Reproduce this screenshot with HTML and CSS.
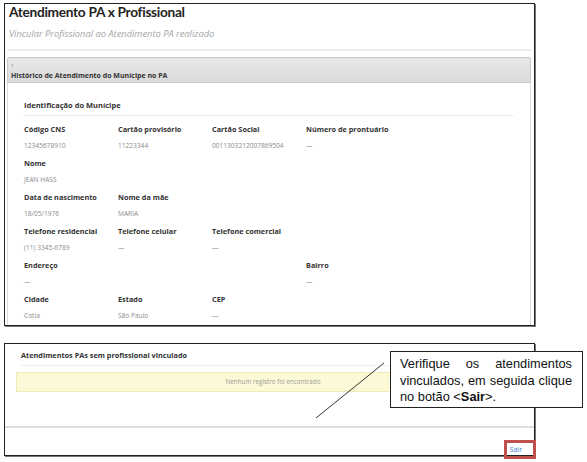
FILE: index.html
```html
<!DOCTYPE html>
<html lang="pt">
<head>
<meta charset="utf-8">
<title>Atendimento PA x Profissional</title>
<link rel="stylesheet" href="styles.css">
</head>
<body>
<div class="frame frame-top">
  <h1 class="title">Atendimento PA x Profissional</h1>
  <p class="subtitle">Vincular Profissional ao Atendimento PA realizado</p>
  <div class="rule"></div>
  <div class="panel">
    <div class="panel-head">
      <span class="chev">›</span>
      <span class="panel-title">Histórico de Atendimento do Munícipe no PA</span>
    </div>
    <div class="panel-body">
      <div class="section-title">Identificação do Munícipe</div>
      <div class="grid">
        <div class="lbl">Código CNS</div><div class="lbl">Cartão provisório</div><div class="lbl">Cartão Social</div><div class="lbl">Número de prontuário</div>
        <div class="val">12345678910</div><div class="val">11223344</div><div class="val">0011303212007869504</div><div class="val">—</div>
        <div class="lbl">Nome</div><div></div><div></div><div></div>
        <div class="val">JEAN HASS</div><div></div><div></div><div></div>
        <div class="lbl">Data de nascimento</div><div class="lbl">Nome da mãe</div><div></div><div></div>
        <div class="val">18/05/1976</div><div class="val">MARIA</div><div></div><div></div>
        <div class="lbl">Telefone residencial</div><div class="lbl">Telefone celular</div><div class="lbl">Telefone comercial</div><div></div>
        <div class="val">(11) 3345-6789</div><div class="val">—</div><div class="val">—</div><div></div>
        <div class="lbl">Endereço</div><div></div><div></div><div class="lbl">Bairro</div>
        <div class="val">—</div><div></div><div></div><div class="val">—</div>
        <div class="lbl">Cidade</div><div class="lbl">Estado</div><div class="lbl">CEP</div><div></div>
        <div class="val">Cotia</div><div class="val">São Paulo</div><div class="val">—</div><div></div>
      </div>
    </div>
  </div>
</div>

<div class="frame frame-bottom">
  <div class="list-title">Atendimentos PAs sem profissional vinculado</div>
  <div class="empty">Nenhum registro foi encontrado</div>
  <div class="footer-rule"></div>
  <div class="footer"><a class="sair" href="#">Sair</a></div>
  <div class="highlight"></div>
</div>

<svg class="pointer" width="80" height="60" viewBox="0 0 80 60"><line x1="69" y1="1" x2="1" y2="56" stroke="#333" stroke-width="1"/></svg>
<div class="callout">Verifique os atendimentos vinculados, em seguida clique no botão &lt;<b>Sair</b>&gt;.</div>
</body>
</html>
```
FILE: styles.css
```css
html, body {
  margin: 0;
  padding: 0;
  background: #fff;
}
body {
  position: relative;
  width: 587px;
  height: 462px;
  overflow: hidden;
  font-family: "Open Sans", "DejaVu Sans", sans-serif;
  color: #333;
}
.frame {
  border: 1px solid #222;
  box-shadow: 1px 1px 0 #777;
  background: #fff;
  box-sizing: border-box;
}
.frame-top {
  margin: 3px 0 0 4px;
  width: 531px;
  height: 323px;
  overflow: hidden;
  padding: 0 3px 0 2px;
}
.title {
  margin: 0;
  padding: 0 0 0 2px;
  font-family: Lato, "Open Sans", sans-serif;
  font-size: 13.7px;
  line-height: 16px;
  font-weight: 700;
  color: #222;
  letter-spacing: -0.3px;
}
.subtitle {
  margin: 0;
  padding: 7px 0 0 2px;
  font-size: 9.3px;
  line-height: 14px;
  font-style: italic;
  color: #a5a5a5;
}
.rule {
  margin-top: 8px;
  height: 2px;
  background: #eeeeee;
}
.panel {
  margin-top: 6px;
}
.panel-head {
  height: 26px;
  border: 1px solid #c8c8c8;
  border-radius: 2px 2px 0 0;
  background: linear-gradient(#e9e9e9, #dadada);
  padding: 2px 0 0 3px;
  box-sizing: border-box;
  display: flex;
  flex-direction: column;
}
.chev {
  font-size: 8px;
  line-height: 8px;
  color: #888;
}
.panel-title {
  margin-top: 2px;
  font-size: 7px;
  line-height: 11px;
  font-weight: 700;
  color: #333;
}
.panel-body {
  border-left: 1px solid #dddddd;
  border-right: 1px solid #dddddd;
  padding: 16px 16px 0 16px;
  height: 260px;
}
.section-title {
  font-size: 7.5px;
  line-height: 12px;
  font-weight: 700;
  color: #333;
  padding: 0 0 4px 1px;
  border-bottom: 1px solid #eeeeee;
  margin: 0 0 0 -1px;
}
.grid {
  margin-top: 4px;
  display: grid;
  grid-template-columns: 94px 94px 94px 94px;
  grid-auto-rows: 17px;
  align-items: center;
}
.lbl {
  font-size: 7.3px;
  font-weight: 700;
  color: #333;
  white-space: nowrap;
}
.val {
  font-size: 6.6px;
  color: #8a8a8a;
  white-space: nowrap;
}
.frame-bottom {
  position: relative;
  margin: 17px 0 0 4px;
  width: 531px;
  height: 113px;
  padding: 5px 0 0 0;
}
.list-title {
  margin: 0 10px 0 16px;
  padding: 0 0 4px 0;
  font-size: 7.3px;
  line-height: 12px;
  font-weight: 700;
  color: #333;
  border-bottom: 1px solid #eeeeee;
}
.empty {
  margin: 6px 4px 0 11px;
  height: 20px;
  box-sizing: border-box;
  background: #fcfad6;
  border: 1px solid #eeebb8;
  font-size: 6.3px;
  line-height: 18px;
  text-align: center;
  color: #999;
}
.footer-rule {
  margin-top: 34px;
  height: 2px;
  background: #dddddd;
}
.footer {
  display: flex;
  justify-content: flex-end;
  padding: 17px 12px 0 0;
}
.sair {
  position: relative;
  z-index: 2;
  font-size: 7px;
  line-height: 9px;
  color: #3d7fd0;
  text-decoration: none;
}
.highlight {
  position: absolute;
  left: 499px;
  top: 96px;
  width: 32px;
  height: 19px;
  border: 3px solid #c0504d;
  box-sizing: border-box;
}
.pointer {
  position: absolute;
  left: 315px;
  top: 362px;
}
.callout {
  position: absolute;
  left: 390px;
  top: 351px;
  width: 193px;
  height: 57px;
  box-sizing: border-box;
  border: 1px solid #222;
  background: #fff;
  padding: 4px 10px 0 9px;
  font-family: "Liberation Sans", Arial, sans-serif;
  font-size: 12.8px;
  line-height: 16.5px;
  text-align: justify;
  color: #111;
}
```
